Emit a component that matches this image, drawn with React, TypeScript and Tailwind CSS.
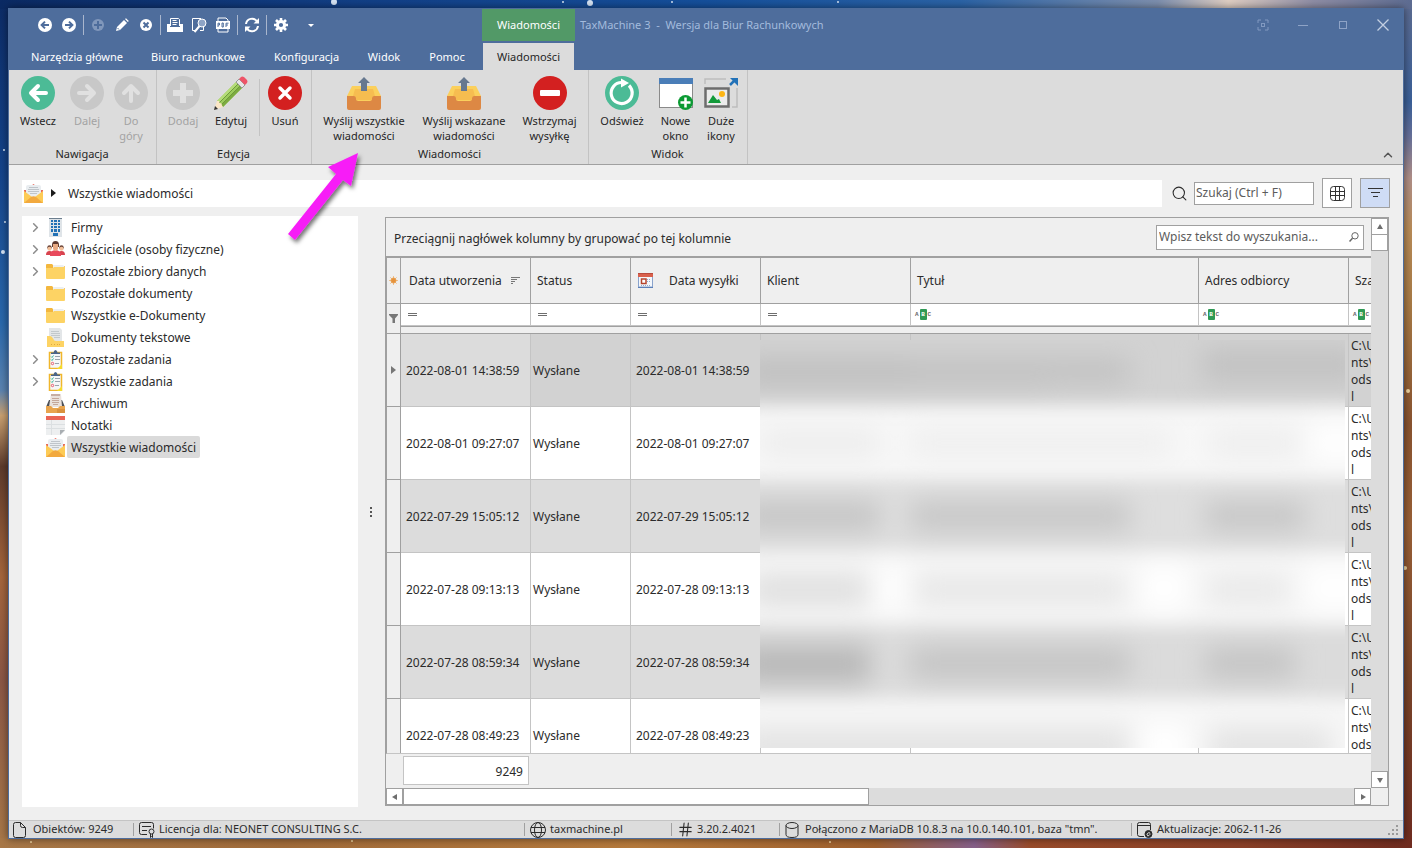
import type { ReactNode } from "react";
import { ChevronRight, ChevronUp, Hash, Search } from "lucide-react";

const tabs = [
  { label: "Narzędzia główne", width: "w-[120px]" },
  { label: "Biuro rachunkowe", width: "w-[122px]" },
  { label: "Konfiguracja", width: "w-[95px]" },
  { label: "Widok", width: "w-[60px]" },
  { label: "Pomoc", width: "w-[66px]" },
];

const rows = [
  { created: "2022-08-01 14:38:59", sent: "2022-08-01 14:38:59" },
  { created: "2022-08-01 09:27:07", sent: "2022-08-01 09:27:07" },
  { created: "2022-07-29 15:05:12", sent: "2022-07-29 15:05:12" },
  { created: "2022-07-28 09:13:13", sent: "2022-07-28 09:13:13" },
  { created: "2022-07-28 08:59:34", sent: "2022-07-28 08:59:34" },
  { created: "2022-07-28 08:49:23", sent: "2022-07-28 08:49:23" },
];

/* ---------- backdrop ---------- */

const Backdrop = () => (
  <svg className="absolute inset-0 h-full w-full" viewBox="0 0 1412 848" preserveAspectRatio="none" aria-hidden="true">
    <defs>
      <linearGradient id="skyLeft" x1="0" y1="0" x2="0" y2="1">
        <stop offset="0" stopColor="#0d2c66" />
        <stop offset="0.2" stopColor="#14438a" />
        <stop offset="0.38" stopColor="#2a68ac" />
        <stop offset="0.46" stopColor="#5b83b0" />
        <stop offset="0.49" stopColor="#c9a070" />
        <stop offset="0.55" stopColor="#5d3a2b" />
        <stop offset="0.68" stopColor="#a5653c" />
        <stop offset="0.8" stopColor="#8b5746" />
        <stop offset="1" stopColor="#a87848" />
      </linearGradient>
      <linearGradient id="skyRight" x1="0" y1="0" x2="0" y2="1">
        <stop offset="0" stopColor="#5d6c92" />
        <stop offset="0.12" stopColor="#3b6099" />
        <stop offset="0.16" stopColor="#66709a" />
        <stop offset="0.21" stopColor="#b08f88" />
        <stop offset="0.27" stopColor="#b98c58" />
        <stop offset="0.36" stopColor="#a87a45" />
        <stop offset="0.5" stopColor="#8a5430" />
        <stop offset="0.62" stopColor="#9a6036" />
        <stop offset="0.8" stopColor="#7a452a" />
        <stop offset="1" stopColor="#702c20" />
      </linearGradient>
      <linearGradient id="skyTop" x1="0" y1="0" x2="1" y2="0">
        <stop offset="0" stopColor="#0b2a63" />
        <stop offset="0.25" stopColor="#123f86" />
        <stop offset="0.5" stopColor="#15509c" />
        <stop offset="0.68" stopColor="#2b63a6" />
        <stop offset="0.82" stopColor="#7d8fae" />
        <stop offset="0.87" stopColor="#e0cfc4" />
        <stop offset="0.93" stopColor="#8f8ea6" />
        <stop offset="1" stopColor="#5d6c92" />
      </linearGradient>
      <linearGradient id="skyBottom" x1="0" y1="0" x2="1" y2="0">
        <stop offset="0" stopColor="#a87848" />
        <stop offset="0.2" stopColor="#a26c3a" />
        <stop offset="0.45" stopColor="#b67a3c" />
        <stop offset="0.62" stopColor="#a0602e" />
        <stop offset="0.69" stopColor="#86608a" />
        <stop offset="0.73" stopColor="#9a4c2a" />
        <stop offset="0.88" stopColor="#8a4028" />
        <stop offset="1" stopColor="#702c20" />
      </linearGradient>
    </defs>
    <rect width="706" height="848" fill="url(#skyLeft)" />
    <rect x="706" width="706" height="848" fill="url(#skyRight)" />
    <rect width="1412" height="9" fill="url(#skyTop)" />
    <rect y="838" width="1412" height="10" fill="url(#skyBottom)" />
    <g fill="#d6e4f5">
      <circle cx="334" cy="2" r="3" />
      <circle cx="590" cy="3" r="3" />
      <circle cx="563" cy="2" r="1" />
      <circle cx="672" cy="2" r="1" />
      <circle cx="838" cy="2" r="1" />
      <circle cx="3" cy="252" r="2" />
      <circle cx="5" cy="222" r="1" />
      <circle cx="4" cy="150" r="1" />
      <circle cx="1408" cy="391" r="2" fill="#f3d9a4" />
      <circle cx="1405" cy="568" r="2" fill="#f3d9a4" />
      <circle cx="31" cy="842" r="1" fill="#f3d9a4" />
      <circle cx="352" cy="841" r="1" fill="#f3d9a4" />
      <circle cx="830" cy="842" r="1" fill="#f3d9a4" />
    </g>
  </svg>
);

/* ---------- title bar icons ---------- */

const QuickButton = ({ label, children }: { label: string; children: ReactNode }) => (
  <button type="button" aria-label={label} className="flex h-6 w-6 shrink-0 items-center justify-center">
    <svg width="16" height="16" viewBox="0 0 16 16" fill="none">
      {children}
    </svg>
  </button>
);

const QuickSeparator = () => <div className="mx-[2px] h-5 w-px bg-[#a9b6cd]" />;

const QuickAccess = () => (
  <div className="flex items-center pl-6">
    <QuickButton label="Wstecz">
      <circle cx="8" cy="8" r="7" fill="#fff" />
      <path d="M12 8H5M8 4.6 4.6 8 8 11.4" stroke="#4e6d9c" strokeWidth="2" />
    </QuickButton>
    <QuickButton label="Dalej">
      <circle cx="8" cy="8" r="7" fill="#fff" />
      <path d="M4 8h7M8 4.6 11.4 8 8 11.4" stroke="#4e6d9c" strokeWidth="2" />
    </QuickButton>
    <QuickSeparator />
    <QuickButton label="Dodaj">
      <circle cx="8" cy="8" r="6" fill="#8097bb" />
      <path d="M8 4v8M4 8h8" stroke="#4e6d9c" strokeWidth="2" />
    </QuickButton>
    <QuickButton label="Edytuj">
      <path d="m2 14 1-4 7-7 3 3-7 7z" fill="#fff" />
      <path d="m11 2 1-.8L14.800 4l-1 1z" fill="#fff" />
      <path d="m3.500 11 1.500 1.500" stroke="#4e6d9c" strokeWidth="1" />
    </QuickButton>
    <QuickButton label="Usuń">
      <circle cx="8" cy="8" r="6" fill="#fff" />
      <path d="m5.500 5.500 5 5m0-5-5 5" stroke="#4e6d9c" strokeWidth="2" />
    </QuickButton>
    <QuickSeparator />
    <QuickButton label="Drukuj">
      <path d="M3.500 9V1.500h8l1 1V9" stroke="#fff" />
      <path d="M5.500 3.500h4M5.500 5.500h5M5.500 7.500h4" stroke="#fff" />
      <path d="M0 7h3v3h10V7h3v8H0z" fill="#fff" />
    </QuickButton>
    <QuickButton label="Podgląd wydruku">
      <path d="M10 1.500H1.500v12H5M12.500 10v3.500H9" stroke="#fff" />
      <circle cx="11" cy="6" r="4" stroke="#fff" fill="#8ea4c6" />
      <path d="m8.500 9-5 6" stroke="#fff" strokeWidth="2" />
    </QuickButton>
    <QuickButton label="Eksport do PDF">
      <path d="M3 5V1h8l2 2v2M3 11v4h10v-4" stroke="#fff" />
      <rect x="1" y="4" width="14" height="8" fill="#fff" />
      <path d="M3 10V6.200h1.500v1.800H3M7 6v4h1.300V6zM11 10V6.200h2.500M11 8h2" stroke="#4e6d9c" />
    </QuickButton>
    <QuickSeparator />
    <QuickButton label="Odśwież">
      <path d="M2 7a6 6 0 0 1 11-2.500M14 9a6 6 0 0 1-11 2.500" stroke="#fff" strokeWidth="2" />
      <path d="M15 1v5.500H9.500zM1 15V9.500h5.500z" fill="#fff" />
    </QuickButton>
    <QuickSeparator />
    <QuickButton label="Ustawienia">
      <circle cx="8" cy="8" r="3.600" stroke="#fff" strokeWidth="3" />
      <g stroke="#fff" strokeWidth="2.600">
        <path d="M8 1v3M8 12v3M1 8h3M12 8h3M3 3l2 2M11 11l2 2M13 3l-2 2M5 11l-2 2" />
      </g>
    </QuickButton>
    <div className="ml-1.5">
      <QuickButton label="Więcej">
        <path d="M5 7h6l-3 3z" fill="#fff" />
      </QuickButton>
    </div>
  </div>
);

const TitleBar = () => (
  <header className="bg-[#4e6d9c] text-[11px] text-white">
    <div className="flex h-[33px]">
      <div className="w-[473px] shrink-0">
        <div className="flex h-8 items-center">
          <QuickAccess />
        </div>
      </div>
      <div className="flex h-8 w-[93px] shrink-0 items-center justify-center bg-[#529967]">Wiadomości</div>
      <h1 className="flex h-8 flex-1 items-center whitespace-pre pl-[5px] text-[#a3bbdd]">
        {"TaxMachine 3  -  Wersja dla Biur Rachunkowych"}
      </h1>
      <div className="flex h-[31px] items-center text-[#9fb2d2]">
        <button type="button" aria-label="Tryb skupienia" className="flex w-10 justify-center">
          <svg width="12" height="12" viewBox="0 0 12 12" fill="none" stroke="#8199c0">
            <path d="M1 4V1h3M8 1h3v3M11 8v3H8M4 11H1V8" />
            <rect x="4.500" y="4.500" width="3" height="3" />
          </svg>
        </button>
        <button type="button" aria-label="Minimalizuj" className="flex w-10 justify-center">
          <svg width="12" height="12" viewBox="0 0 12 12" stroke="#8ea3c6">
            <path d="M1 6.500h10" />
          </svg>
        </button>
        <button type="button" aria-label="Maksymalizuj" className="flex w-10 justify-center">
          <svg width="12" height="12" viewBox="0 0 12 12" fill="none" stroke="#8ea3c6">
            <rect x="2.500" y="2.500" width="7" height="7" />
          </svg>
        </button>
        <button type="button" aria-label="Zamknij" className="flex w-10 justify-center">
          <svg width="12" height="12" viewBox="0 0 12 12" stroke="#c3cfe2" strokeWidth="1.300">
            <path d="m.5.500 11 11m0-11-11 11" />
          </svg>
        </button>
      </div>
    </div>
    <nav className="flex h-7 items-end pl-2">
      {tabs.map((tab) => (
        <button key={tab.label} type="button" className={`h-[27px] shrink-0 pt-[2px] ${tab.width}`}>
          {tab.label}
        </button>
      ))}
      <button type="button" className="ml-[3px] h-[27px] w-[91px] shrink-0 bg-[#dcdcdc] pt-[2px] text-[#262626]">
        Wiadomości
      </button>
    </nav>
  </header>
);

/* ---------- ribbon ---------- */

const RoundIcon = ({ fill, children }: { fill: string; children: ReactNode }) => (
  <svg width="34" height="34" viewBox="0 0 34 34" fill="none">
    <circle cx="17" cy="17" r="17" fill={fill} />
    {children}
  </svg>
);

const OutboxIcon = () => (
  <svg width="34" height="34" viewBox="0 0 34 34">
    <path d="M5 10h24l5 10v6H0v-6z" fill="#fbd05c" />
    <path d="M8 13h18l2 7-4 4H10l-4-4z" fill="#f6bd50" />
    <path d="M0 20h7q2 0 2 2.500T11.500 25h11q2.500 0 2.500-2.500T27 20h7v12q0 2-2 2H2q-2 0-2-2z" fill="#dd8844" />
    <path d="M17 1 11 7h3v8h6V7h3z" fill="#66788f" />
  </svg>
);

const PencilIcon = () => (
  <svg width="34" height="34" viewBox="0 0 34 34">
    <path d="m3 25 19-19 6 6-19 19z" fill="#9ccc5c" />
    <path d="m3 25 19-19 2 2L5 27z" fill="#b5dc79" />
    <path d="m7 29 19-19 2 2L9 31z" fill="#7cab40" />
    <path d="m5 27 19-19M7 29l19-19" stroke="#6f9a3a" strokeWidth="1" />
    <path d="m3 25 2 0 .500 2 2 .500.500 2 1 1.500L0 34z" fill="#fbe6c6" />
    <path d="m1 30 3 3-4 1z" fill="#333" />
    <path d="m22 6 3-3 6 6-3 3z" fill="#e6e6e6" stroke="#9a9a9a" />
    <path d="m25 3 2-2q1-1 3 0l3 3q1 1.500 0 3l-2 2z" fill="#ee5468" />
  </svg>
);

const NewWindowIcon = () => (
  <svg width="34" height="34" viewBox="0 0 34 34">
    <rect x=".500" y="2.500" width="33" height="29" fill="#fff" stroke="#8a8a8a" />
    <rect y="2" width="34" height="6" fill="#4a7eb8" />
    <circle cx="26.500" cy="26.500" r="7.500" fill="#0b9a33" />
    <path d="M26.500 21.500v10M21.500 26.500h10" stroke="#fff" strokeWidth="2.500" />
  </svg>
);

const LargeIconsIcon = () => (
  <svg width="34" height="34" viewBox="0 0 34 34" fill="none">
    <path d="M1 8V3h21M33 12v19h-5" stroke="#bdbdbd" strokeWidth="1.500" />
    <rect x="1.500" y="12.500" width="23" height="18" fill="#ececec" stroke="#6d6d6d" strokeWidth="2.500" />
    <path d="m4 27 5-8 4 5 2-1 2 4z" fill="#129a3a" />
    <circle cx="18" cy="18" r="3" fill="#fdb515" />
    <path d="m26 9 6-6" stroke="#2272b8" strokeWidth="2.500" />
    <path d="M26 2h8v8l-3-3-2-2z" fill="#2272b8" />
  </svg>
);

type RibbonButtonProps = {
  lines: string[];
  width: string;
  icon: ReactNode;
  disabled?: boolean;
};

const RibbonButton = ({ lines, width, icon, disabled }: RibbonButtonProps) => (
  <button
    type="button"
    disabled={disabled}
    className={`flex shrink-0 flex-col items-center ${width} ${disabled ? "text-[#a3a3a3]" : "text-[#262626]"}`}
  >
    {icon}
    <span className="mt-[3px] flex flex-col whitespace-nowrap leading-[15px]">
      {lines.map((line) => (
        <span key={line}>{line}</span>
      ))}
    </span>
  </button>
);

const RibbonGroup = ({ title, children }: { title: string; children: ReactNode }) => (
  <section className="flex flex-col border-r border-[#c3c3c3] pl-[3px] pr-1 pt-[6px]">
    <div className="flex h-[70px] items-start">{children}</div>
    <h2 className="text-center leading-4 text-[#262626]">{title}</h2>
  </section>
);

const Ribbon = () => (
  <div className="flex h-[95px] shrink-0 border-b border-[#a0a0a0] bg-[#dcdcdc] text-[11px]">
    <RibbonGroup title="Nawigacja">
      <RibbonButton
        lines={["Wstecz"]}
        width="w-[52px]"
        icon={
          <RoundIcon fill="#4cbb96">
            <path d="M25 17H11M17 10l-7 7 7 7" stroke="#fff" strokeWidth="4" strokeLinecap="round" strokeLinejoin="round" />
          </RoundIcon>
        }
      />
      <RibbonButton
        lines={["Dalej"]}
        width="w-[46px]"
        disabled
        icon={
          <RoundIcon fill="#c8c8c8">
            <path d="M9 17h14M17 10l7 7-7 7" stroke="#e0e0e0" strokeWidth="4" strokeLinecap="round" strokeLinejoin="round" />
          </RoundIcon>
        }
      />
      <RibbonButton
        lines={["Do", "góry"]}
        width="w-[42px]"
        disabled
        icon={
          <RoundIcon fill="#c8c8c8">
            <path d="M17 25V11M10 17l7-7 7 7" stroke="#e0e0e0" strokeWidth="4" strokeLinecap="round" strokeLinejoin="round" />
          </RoundIcon>
        }
      />
    </RibbonGroup>
    <RibbonGroup title="Edycja">
      <RibbonButton
        lines={["Dodaj"]}
        width="w-[46px]"
        disabled
        icon={
          <RoundIcon fill="#c8c8c8">
            <path d="M17 7v20M7 17h20" stroke="#e0e0e0" strokeWidth="6" />
          </RoundIcon>
        }
      />
      <RibbonButton lines={["Edytuj"]} width="w-[50px]" icon={<PencilIcon />} />
      <div className="mx-[3px] mt-[3px] h-[57px] w-px bg-[#c3c3c3]" />
      <RibbonButton
        lines={["Usuń"]}
        width="w-[44px]"
        icon={
          <RoundIcon fill="#d32020">
            <path d="m12 12 10 10m0-10L12 22" stroke="#fff" strokeWidth="3.500" strokeLinecap="round" />
          </RoundIcon>
        }
      />
    </RibbonGroup>
    <RibbonGroup title="Wiadomości">
      <RibbonButton lines={["Wyślij wszystkie", "wiadomości"]} width="w-[98px]" icon={<OutboxIcon />} />
      <RibbonButton lines={["Wyślij wskazane", "wiadomości"]} width="w-[102px]" icon={<OutboxIcon />} />
      <RibbonButton
        lines={["Wstrzymaj", "wysyłkę"]}
        width="w-[69px]"
        icon={
          <RoundIcon fill="#d32020">
            <rect x="7" y="14" width="20" height="6" rx="1" fill="#fff" />
          </RoundIcon>
        }
      />
    </RibbonGroup>
    <RibbonGroup title="Widok">
      <RibbonButton
        lines={["Odśwież"]}
        width="w-[60px]"
        icon={
          <RoundIcon fill="#4cbb96">
            <path d="M24 9.500a10.500 10.500 0 1 1-7-3" stroke="#fff" strokeWidth="3.200" />
            <path d="M16 2.500v9l8-4.500z" fill="#fff" />
          </RoundIcon>
        }
      />
      <RibbonButton lines={["Nowe", "okno"]} width="w-[47px]" icon={<NewWindowIcon />} />
      <RibbonButton lines={["Duże", "ikony"]} width="w-[44px]" icon={<LargeIconsIcon />} />
    </RibbonGroup>
    <div className="flex flex-1 items-end justify-end p-[2px] pr-2">
      <button type="button" aria-label="Zwiń wstążkę">
        <ChevronUp size={14} strokeWidth={2.500} color="#555" />
      </button>
    </div>
  </div>
);

/* ---------- tree ---------- */

const MailIcon = () => (
  <svg width="19" height="19" viewBox="0 0 19 19">
    <path d="M0 6h19v12H0z" fill="#e86a5c" />
    <path d="M7 2 9.500 0 12 2z" fill="#e86a5c" />
    <path d="M2 3q0-2 2-2h11q2 0 2 2v11H2z" fill="#e9edf0" />
    <path d="M5 3.500h9M4 5.500h11M4 7.500h11M6 9.500h7" stroke="#bfc5ca" />
    <path d="m0 7 9.500 7L19 7v12H0z" fill="#fdcb56" />
    <path d="m0 19 7-6q2.500-1.500 5 0l7 6z" fill="#f2a93e" />
  </svg>
);

const BuildingIcon = () => (
  <svg width="19" height="19" viewBox="0 0 19 19">
    <rect x="3" width="13" height="19" fill="#dfe4e8" />
    <path d="M3 0h13v1H3z" fill="#6d7f8f" />
    <path d="M5 2h2v2H5zM8 2h3v2H8zM12 2h2v2h-2zM5 5h2v2H5zM8 5h3v2H8zM12 5h2v2h-2zM5 8h2v2H5zM8 8h3v2H8zM12 8h2v2h-2zM5 11h2v3H5zM8 11h3v3H8zM12 11h2v3h-2zM7 15h5v3H7z" fill="#2371b5" />
  </svg>
);

const PeopleIcon = () => (
  <svg width="19" height="19" viewBox="0 0 19 19">
    <path d="M0 15q0-4 3.500-4T7 15zM12 15q0-4 3.500-4t3.500 4z" fill="#d8434e" />
    <circle cx="3.500" cy="7.500" r="2.200" fill="#6b4438" />
    <circle cx="15.500" cy="7.500" r="2.200" fill="#6b4438" />
    <circle cx="3.500" cy="8.800" r="2" fill="#f3c09a" />
    <circle cx="15.500" cy="8.800" r="2" fill="#f3c09a" />
    <path d="M4 16q0-6 5.500-6t5.500 6z" fill="#e8495c" />
    <path d="M6 5q0-4 3.500-4T13 5v2H6z" fill="#5e3a30" />
    <path d="M7 4h5v5q-2.500 4-5 0z" fill="#e8aa83" />
  </svg>
);

const FolderIcon = () => (
  <svg width="19" height="19" viewBox="0 0 19 19">
    <path d="M0 3q0-1 1-1h5l2 2h10q1 0 1 1v4H0z" fill="#f3b73e" />
    <path d="M7 3h10l1 1v3H7z" fill="#eceff1" />
    <path d="M0 6h7l1-1h11v11q0 1-1 1H1q-1 0-1-1z" fill="#fdd364" />
  </svg>
);

const TextDocsIcon = () => (
  <svg width="19" height="19" viewBox="0 0 19 19">
    <path d="M3 0h11l2 2v13H3z" fill="#e3e6e8" />
    <path d="M5 3.500h8M5 5.500h9M5 7.500h9M8 9.500h6" stroke="#c2c8cc" />
    <path d="M1 8h3q2 0 3 2.500T10 13h8v6H1z" fill="#fdd364" />
    <path d="M5 16.500h1m2 0h1m2 0h1m1 0h1" stroke="#e0a93e" />
  </svg>
);

const TasksIcon = () => (
  <svg width="19" height="19" viewBox="0 0 19 19">
    <rect x="3.500" y="2.500" width="12" height="16" fill="#f5f7f8" stroke="#f0b62c" strokeWidth="1.500" />
    <path d="M5 4V2.500h2.500Q8 0 9.500 0t2 2.500H14V4z" fill="#4a6488" />
    <path d="m5 6.500 1 1 1.500-2M5 9.500l1 1 1.500-2" stroke="#35b39a" fill="none" />
    <path d="M9 6.500h5M9 9.500h5M9 13.500h4" stroke="#9aa4ad" />
    <circle cx="6.500" cy="13.500" r="1.200" stroke="#e8576c" fill="none" />
    <path d="M16 14v5h-5z" fill="#f5dc2c" />
  </svg>
);

const ArchiveIcon = () => (
  <svg width="19" height="19" viewBox="0 0 19 19">
    <path d="M3 6h13l3 7H0z" fill="#4b4f56" />
    <path d="M5 0h10l1 13H3z" fill="#e9e1dc" />
    <path d="M5 0h9v2H5z" fill="#c6aea4" />
    <path d="M6 4.500h7M6 6.500h7M6 8.500h7M7 10.500h5" stroke="#c4a79b" />
    <path d="M0 12h5l2 2h5l2-2h5v7H0z" fill="#e8a44e" />
    <path d="M11 15h8v4h-8z" fill="#d9913d" />
  </svg>
);

const NotesIcon = () => (
  <svg width="19" height="19" viewBox="0 0 19 19">
    <path d="M0 4h19v11l-4 4H0z" fill="#edeff0" />
    <path d="M0 8.500h19M0 12.500h19M5.500 4v15" stroke="#dbdfe1" />
    <path d="M0 0h19v4H0z" fill="#ea6455" />
    <path d="M14 14h5l-5 5z" fill="#a9aeb2" />
  </svg>
);

const tree = [
  { label: "Firmy", icon: <BuildingIcon />, expandable: true },
  { label: "Właściciele (osoby fizyczne)", icon: <PeopleIcon />, expandable: true },
  { label: "Pozostałe zbiory danych", icon: <FolderIcon />, expandable: true },
  { label: "Pozostałe dokumenty", icon: <FolderIcon /> },
  { label: "Wszystkie e-Dokumenty", icon: <FolderIcon /> },
  { label: "Dokumenty tekstowe", icon: <TextDocsIcon /> },
  { label: "Pozostałe zadania", icon: <TasksIcon />, expandable: true },
  { label: "Wszystkie zadania", icon: <TasksIcon />, expandable: true },
  { label: "Archiwum", icon: <ArchiveIcon /> },
  { label: "Notatki", icon: <NotesIcon /> },
  { label: "Wszystkie wiadomości", icon: <MailIcon />, selected: true },
];

const Tree = () => (
  <ul className="w-[336px] shrink-0 bg-white">
    {tree.map((item) => (
      <li key={item.label} className="flex h-[22px] items-center pl-[6px]">
        <span className="flex w-[18px] shrink-0">
          {item.expandable && <ChevronRight size={15} strokeWidth={2.500} color="#8d8d8d" />}
        </span>
        {item.icon}
        <span
          className={`ml-[2px] flex h-[22px] items-center rounded-[2px] px-1 pt-[2px] ${item.selected ? "bg-[#dadada]" : ""}`}
        >
          {item.label}
        </span>
      </li>
    ))}
  </ul>
);

/* ---------- grid ---------- */

const EqualsMark = () => (
  <svg width="9" height="5" viewBox="0 0 9 5" stroke="#6e6e6e">
    <path d="M0 1.500h9M0 3.500h9" />
  </svg>
);

const AbcMark = () => (
  <span className="flex items-center font-mono text-[6px] font-bold leading-[11px] text-[#6a6a6a]">
    A<span className="mx-px w-[7px] rounded-[1px] bg-[#2f9a55] text-center text-white">B</span>C
  </span>
);

const CalendarIcon = () => (
  <svg width="15" height="15" viewBox="0 0 15 15">
    <rect x=".500" y=".500" width="14" height="13.500" fill="#f4f7fb" stroke="#8aa3cc" />
    <path d="M0 0h15v4H0z" fill="#d9604c" />
    <path d="M0 0h15v1H0z" fill="#b84a3c" />
    <rect x="3.500" y="6" width="4.500" height="4.500" fill="#fff" stroke="#b5442e" strokeWidth="1.500" />
    <path d="M9 6.500h4M9 8.500h4M3 12.500h10" stroke="#93a9cd" strokeDasharray="1 1" />
    <path d="M0 14.500h15" stroke="#5b7fb8" />
  </svg>
);

/* Smeared text that hides client data in the Klient, Tytuł and Adres odbiorcy columns. */
const RedactedArea = () => (
  <svg className="absolute left-[373px] top-[82px]" width="585" height="408" viewBox="0 0 585 408" aria-hidden="true">
    <defs>
      <filter id="smearRows" x="-10%" y="-10%" width="120%" height="120%">
        <feGaussianBlur stdDeviation="2 9" />
      </filter>
      <filter id="smearText" x="-20%" y="-60%" width="140%" height="220%">
        <feGaussianBlur stdDeviation="13 13" />
      </filter>
      <clipPath id="smearClip">
        <rect width="585" height="408" />
      </clipPath>
    </defs>
    <g clipPath="url(#smearClip)">
      <rect width="585" height="408" fill="#f5f5f5" />
      <g filter="url(#smearRows)">
        <rect x="-40" y="-40" width="670" height="106" fill="#d2d2d2" />
        <rect x="-40" y="66" width="670" height="73" fill="#f7f7f7" />
        <rect x="-40" y="139" width="670" height="73" fill="#dedede" />
        <rect x="-40" y="212" width="670" height="73" fill="#f6f6f6" />
        <rect x="-40" y="285" width="670" height="73" fill="#dbdbdb" />
        <rect x="-40" y="358" width="670" height="90" fill="#f6f6f6" />
      </g>
      <g filter="url(#smearText)">
        <rect x="-20" y="18" width="310" height="28" fill="#bfbfbf" />
        <rect x="150" y="18" width="220" height="26" fill="#c2c2c2" />
        <rect x="442" y="8" width="160" height="34" fill="#c2c2c2" />
        <rect x="0" y="90" width="120" height="26" fill="#ededed" />
        <rect x="150" y="90" width="260" height="26" fill="#efefef" />
        <rect x="450" y="90" width="90" height="26" fill="#eeeeee" />
        <rect x="550" y="86" width="50" height="34" fill="#fff" />
        <rect x="-20" y="162" width="140" height="28" fill="#c4c4c4" />
        <rect x="150" y="162" width="220" height="28" fill="#c6c6c6" />
        <rect x="445" y="162" width="100" height="28" fill="#c6c6c6" />
        <rect x="-10" y="234" width="118" height="32" fill="#e0e0e0" />
        <rect x="155" y="236" width="210" height="28" fill="#e7e7e7" />
        <rect x="448" y="236" width="80" height="28" fill="#e9e9e9" />
        <rect x="118" y="226" width="26" height="44" fill="#fff" />
        <rect x="380" y="226" width="48" height="44" fill="#fff" />
        <rect x="545" y="226" width="60" height="44" fill="#fff" />
        <rect x="-20" y="306" width="130" height="36" fill="#b8b8b8" />
        <rect x="150" y="308" width="220" height="30" fill="#c4c4c4" />
        <rect x="445" y="308" width="90" height="30" fill="#c4c4c4" />
        <rect x="-20" y="388" width="390" height="40" fill="#e4e4e4" />
        <rect x="380" y="384" width="48" height="44" fill="#fff" />
        <rect x="450" y="388" width="120" height="40" fill="#e4e4e4" />
      </g>
    </g>
  </svg>
);

const headCell = "h-[46px] border-b border-r border-[#a0a0a0] p-0 text-left font-normal";
const filterCell = "h-[22px] border-b border-r border-[#c4c4c4] bg-white p-0";
const rowCell = "h-[73px] border-b border-r border-[#c4c4c4] p-0 pt-[2px]";
const sideCell = "h-[73px] border-b border-r border-[#a0a0a0] p-0";

const rowColor = (index: number) => {
  if (index === 0) return "bg-[#d2d2d2]";
  return index % 2 === 0 ? "bg-[#dcdcdc]" : "bg-white";
};

const MessagesTable = () => (
  <div className="relative min-h-0 flex-1 overflow-hidden border-b border-l border-b-[#c4c4c4] border-l-[#a0a0a0]">
    <table className="w-[1112px] table-fixed border-separate border-spacing-0">
      <colgroup>
        <col className="w-[14px]" />
        <col className="w-[130px]" />
        <col className="w-[100px]" />
        <col className="w-[130px]" />
        <col className="w-[150px]" />
        <col className="w-[288px]" />
        <col className="w-[150px]" />
        <col className="w-[150px]" />
      </colgroup>
      <thead>
        <tr>
          <th className={headCell}>
            <svg className="mx-auto" width="9" height="9" viewBox="0 0 9 9" stroke="#f0c08e">
              <path d="M4.500 0v9M0 4.500h9M1.300 1.300l6.400 6.400M7.700 1.300 1.300 7.700" />
              <circle cx="4.500" cy="4.500" r="2.500" fill="#e5923c" stroke="#e8a050" />
            </svg>
          </th>
          <th className={headCell}>
            <span className="flex items-center justify-between pl-2 pr-[10px]">
              Data utworzenia
              <svg width="9" height="7" viewBox="0 0 9 7" stroke="#777">
                <path d="M0 .500h9M0 2.500h6M0 4.500h4M0 6.500h2" />
              </svg>
            </span>
          </th>
          <th className={`${headCell} pl-[6px]`}>Status</th>
          <th className={headCell}>
            <span className="flex items-center gap-4 pl-[7px]">
              <CalendarIcon />
              Data wysyłki
            </span>
          </th>
          <th className={`${headCell} pl-[6px]`}>Klient</th>
          <th className={`${headCell} pl-[6px]`}>Tytuł</th>
          <th className={`${headCell} pl-[6px]`}>Adres odbiorcy</th>
          <th className={`${headCell} pl-[6px]`}>Sza</th>
        </tr>
        <tr>
          <td rowSpan={2} className="border-b border-r border-[#a0a0a0] p-0">
            <svg className="mx-auto" width="9" height="9" viewBox="0 0 9 9" fill="#777">
              <path d="M0 0h9v1L6 4.500V9H3.500V4.500L0 1z" />
            </svg>
          </td>
          {[0, 1, 2, 3].map((i) => (
            <td key={i} className={`${filterCell} pl-[7px]`}>
              <EqualsMark />
            </td>
          ))}
          {[4, 5, 6].map((i) => (
            <td key={i} className={`${filterCell} pl-1`}>
              <AbcMark />
            </td>
          ))}
        </tr>
        <tr>
          <td colSpan={7} className="h-2 border-y border-[#a0a0a0] p-0" />
        </tr>
      </thead>
      <tbody>
        {rows.map((row, index) => (
          <tr key={row.created} className={rowColor(index)}>
            <td className={`${sideCell} bg-[#efefef]`}>
              {index === 0 && (
                <svg className="mx-auto" width="5" height="8" viewBox="0 0 5 8" fill="#777">
                  <path d="M0 0l5 4-5 4z" />
                </svg>
              )}
            </td>
            <td className={`${rowCell} pl-[5px] ${index === 0 ? "bg-[#dcdcdc]" : ""}`}>{row.created}</td>
            <td className={`${rowCell} pl-[2px]`}>Wysłane</td>
            <td className={`${rowCell} pl-[5px]`}>{row.sent}</td>
            <td className={rowCell} />
            <td className={rowCell} />
            <td className={rowCell} />
            <td className={`${rowCell} pl-[2px] leading-[17px]`}>
              C:\U
              <br />
              nts\
              <br />
              ods
              <br />l
            </td>
          </tr>
        ))}
      </tbody>
    </table>
    <RedactedArea />
  </div>
);

const ScrollButton = ({ label, path, size }: { label: string; path: string; size: string }) => (
  <button
    type="button"
    aria-label={label}
    className={`flex shrink-0 items-center justify-center border border-[#a0a0a0] bg-white ${size}`}
  >
    <svg width="6" height="6" viewBox="0 0 6 6" fill="#6e6e6e">
      <path d={path} />
    </svg>
  </button>
);

const MessagesGrid = () => (
  <div className="my-px mr-px flex min-w-0 flex-1 flex-col border border-[#a0a0a0]">
    <div className="flex min-h-0 flex-1">
      <div className="flex min-w-0 flex-1 flex-col">
        <div className="flex h-10 shrink-0 items-center justify-between border-b-2 border-[#a0a0a0] pl-2 pr-[7px]">
          <span className="pt-[3px]">Przeciągnij nagłówek kolumny by grupować po tej kolumnie</span>
          <label className="flex h-[25px] w-[208px] items-center border border-[#a0a0a0] bg-white px-[2px]">
            <input
              type="text"
              aria-label="Wpisz tekst do wyszukania"
              placeholder="Wpisz tekst do wyszukania..."
              className="min-w-0 flex-1 outline-none placeholder:text-[#5c5c5c]"
            />
            <svg className="mr-[2px]" width="10" height="10" viewBox="0 0 10 10" fill="none" stroke="#666">
              <circle cx="6" cy="3.800" r="3.200" />
              <path d="M3.500 6.200.500 9.500" strokeWidth="1.500" />
            </svg>
          </label>
        </div>
        <MessagesTable />
        <div className="flex h-[34px] shrink-0 pl-[17px] pt-[2px]">
          <output className="flex h-[29px] w-[126px] items-center justify-end border border-[#c4c4c4] bg-white pr-[5px] pt-[2px]">
            9249
          </output>
        </div>
      </div>
      <div className="flex w-[17px] shrink-0 flex-col bg-[#dcdcdc]">
        <ScrollButton label="Przewiń w górę" path="M3 0l3 5H0z" size="h-[17px] w-[17px]" />
        <div className="h-4 border border-t-0 border-[#a0a0a0] bg-white" />
        <div className="flex-1" />
        <ScrollButton label="Przewiń w dół" path="M0 1h6L3 6z" size="h-[17px] w-[17px]" />
      </div>
    </div>
    <div className="flex h-[17px] shrink-0">
      <div className="flex flex-1 bg-[#dcdcdc]">
        <ScrollButton label="Przewiń w lewo" path="M5 0v6L0 3z" size="h-[17px] w-[17px]" />
        <div className="w-[466px] border border-[#a0a0a0] bg-white" />
        <div className="flex-1" />
        <ScrollButton label="Przewiń w prawo" path="M1 0v6l5-3z" size="h-[17px] w-[17px]" />
      </div>
      <div className="w-[17px] shrink-0" />
    </div>
  </div>
);

/* ---------- toolbar and status bar ---------- */

const Toolbar = () => (
  <div className="flex h-[30px] shrink-0 items-center">
    <div className="flex h-[27px] flex-1 items-center bg-white pl-[2px]">
      <MailIcon />
      <svg className="ml-2" width="5" height="8" viewBox="0 0 5 8" fill="#1c1c1c">
        <path d="M0 0l5 4-5 4z" />
      </svg>
      <span className="ml-3 pt-[2px]">Wszystkie wiadomości</span>
    </div>
    <label className="flex items-center pl-[9px]">
      <Search size={17} strokeWidth={1.500} color="#2b2b2b" />
      <input
        type="text"
        aria-label="Szukaj"
        placeholder="Szukaj (Ctrl + F)"
        className="ml-[6px] h-[23px] w-[120px] border border-[#a0a0a0] bg-white px-px pb-px outline-none placeholder:text-[#5c5c5c]"
      />
    </label>
    <button
      type="button"
      aria-label="Siatka"
      className="ml-2 flex h-[30px] w-[30px] items-center justify-center border border-[#a0a0a0] bg-white"
    >
      <svg width="15" height="15" viewBox="0 0 15 15" fill="none" stroke="#333">
        <rect x=".500" y=".500" width="14" height="14" rx="3" />
        <path d="M5.500 0v15M9.500 0v15M0 5.500h15M0 9.500h15" />
      </svg>
    </button>
    <button
      type="button"
      aria-label="Filtr"
      className="ml-2 flex h-[30px] w-[30px] items-center justify-center border border-[#a0a0a0] bg-[#cfdcf5]"
    >
      <svg width="15" height="11" viewBox="0 0 15 11" stroke="#333">
        <path d="M0 .500h15M3 4.500h9M5 8.500h5" />
      </svg>
    </button>
  </div>
);

const StatusItem = ({ icon, width, children }: { icon: ReactNode; width: string; children: ReactNode }) => (
  <div className={`flex items-center overflow-hidden whitespace-nowrap ${width}`}>
    <span className="flex w-5 shrink-0 items-center">{icon}</span>
    {children}
  </div>
);

const StatusSeparator = () => <div className="my-[2px] mr-[5px] w-px shrink-0 bg-[#a0a0a0]" />;

const StatusBar = () => (
  <footer className="flex h-[18px] shrink-0 border-t border-[#c4c4c4] bg-[#dcdcdc] pl-1 text-[11px]">
    <StatusItem
      width="w-[120px]"
      icon={
        <svg width="13" height="16" viewBox="0 0 13 16" fill="none" stroke="#2b2b2b">
          <path d="M.500 2.500q0-2 2-2h5l5 5v8q0 2-2 2h-8q-2 0-2-2zM7.500.500v3q0 2 2 2h3" />
        </svg>
      }
    >
      Obiektów: 9249
    </StatusItem>
    <StatusSeparator />
    <StatusItem
      width="w-[385px]"
      icon={
        <svg width="16" height="16" viewBox="0 0 16 16" fill="none" stroke="#2b2b2b">
          <path d="M8 12.500H2.500q-2 0-2-2v-8q0-2 2-2h10q2 0 2 2v4M3 4.500h9M3 8.500h5" />
          <circle cx="12.500" cy="9.500" r="2.500" />
          <path d="M11.500 12v3.500l1-1 1 1V12" />
        </svg>
      }
    >
      Licencja dla: NEONET CONSULTING S.C.
    </StatusItem>
    <StatusSeparator />
    <StatusItem
      width="w-[141px]"
      icon={
        <svg width="16" height="16" viewBox="0 0 16 16" fill="none" stroke="#2b2b2b">
          <circle cx="8" cy="8" r="7.500" />
          <ellipse cx="8" cy="8" rx="3.500" ry="7.500" />
          <path d="M1 5.500h14M1 10.500h14" />
        </svg>
      }
    >
      <a href="#taxmachine">taxmachine.pl</a>
    </StatusItem>
    <StatusSeparator />
    <StatusItem width="w-[102px]" icon={<Hash size={17} strokeWidth={1.500} />}>
      3.20.2.4021
    </StatusItem>
    <StatusSeparator />
    <StatusItem
      width="w-[346px]"
      icon={
        <svg width="14" height="16" viewBox="0 0 14 16" fill="none" stroke="#2b2b2b">
          <ellipse cx="7" cy="3.500" rx="6" ry="3" />
          <path d="M1 3.500v9q0 3 6 3t6-3v-9" />
        </svg>
      }
    >
      Połączono z MariaDB 10.8.3 na 10.0.140.101, baza "tmn".
    </StatusItem>
    <StatusSeparator />
    <StatusItem
      width="flex-1"
      icon={
        <svg width="16" height="16" viewBox="0 0 16 16" fill="none" stroke="#2b2b2b">
          <path d="M7 14.500H3q-2.500 0-2.500-2v-10q0-2 2-2h9q2 0 2 2V8M.500 3.500h13" />
          <circle cx="11.500" cy="12" r="3.500" fill="#2b2b2b" />
          <path d="M10 13a2 2 0 0 1 3-2M13 11.500a2 2 0 0 1-3 2" stroke="#dcdcdc" />
        </svg>
      }
    >
      Aktualizacje: 2062-11-26
    </StatusItem>
    <svg className="mr-1 mt-1 shrink-0" width="11" height="11" viewBox="0 0 11 11" fill="#9a9a9a">
      <path d="M8 0h2v2H8zM8 4h2v2H8zM4 4h2v2H4zM8 8h2v2H8zM4 8h2v2H4zM0 8h2v2H0z" />
    </svg>
  </footer>
);

const PointerArrow = () => (
  <svg
    className="pointer-events-none absolute left-[280px] top-[145px]"
    width="90"
    height="105"
    viewBox="280 145 90 105"
    aria-hidden="true"
  >
    <defs>
      <filter id="arrowShadow" x="-20%" y="-20%" width="150%" height="150%">
        <feDropShadow dx="2" dy="3" stdDeviation="2" floodColor="#000" floodOpacity="0.55" />
      </filter>
    </defs>
    <path d="M358 153 328 167l8 7-48 60 7 6 48-60 8 6z" fill="#f71ff7" filter="url(#arrowShadow)" />
  </svg>
);

const App = () => {
  return (
    <div className="relative flex h-screen flex-col overflow-hidden px-2 pb-[9px] pt-2 font-['Noto_Sans',sans-serif] text-[12px] text-[#2b2b2b]">
      <Backdrop />
      <div className="relative flex min-h-0 flex-1 flex-col border border-[#4e6d9c] bg-[#efefef] shadow-[0_0_8px_rgba(0,0,0,0.5)]">
        <TitleBar />
        <Ribbon />
        <main className="flex min-h-0 flex-1 flex-col gap-2 p-[13px]">
          <Toolbar />
          <div className="flex min-h-0 flex-1">
            <Tree />
            <div className="flex w-[27px] shrink-0 items-center justify-center">
              <svg width="3" height="10" viewBox="0 0 3 10" fill="#555">
                <path d="M0 0h2v2H0zM0 4h2v2H0zM0 8h2v2H0z" />
              </svg>
            </div>
            <MessagesGrid />
          </div>
        </main>
        <StatusBar />
      </div>
      <PointerArrow />
    </div>
  );
};

export default App;
